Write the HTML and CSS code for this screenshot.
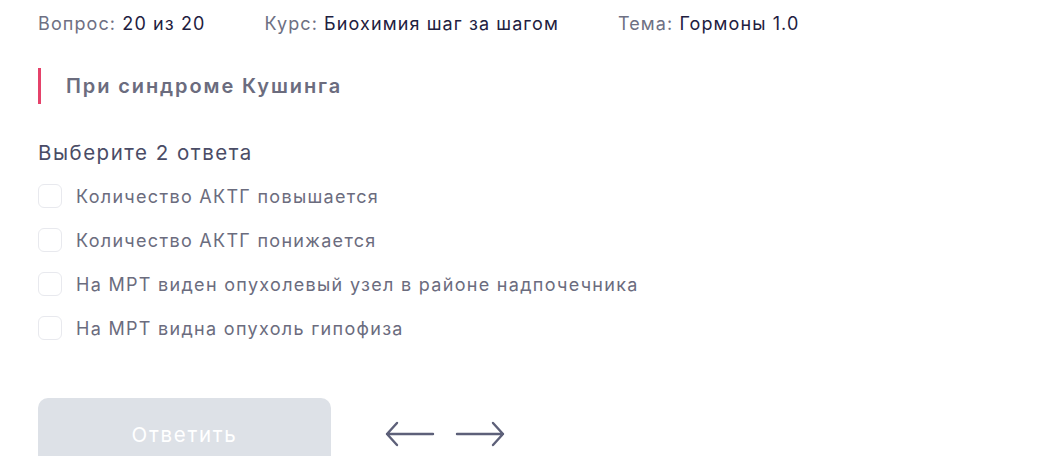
FILE: index.html
```html
<!DOCTYPE html>
<html lang="ru">

<head>
  <meta charset="UTF-8" />
  <meta name="viewport" content="width=device-width, initial-scale=1.0" />
  <title>Тест</title>
  <link rel="stylesheet" href="styles.css">
</head>

<body>
  <main class="quiz">
    <!-- Question meta -->
    <div class="quiz-meta">
      <span class="meta-item">Вопрос: <b>20 из 20</b></span>
      <span class="meta-item">Курс: <b>Биохимия шаг за шагом</b></span>
      <span class="meta-item">Тема: <b>Гормоны 1.0</b></span>
    </div>

    <h2 class="quiz-question">При синдроме Кушинга</h2>

    <p class="quiz-hint">Выберите 2 ответа</p>

    <ul class="answer-list">
      <li><label class="answer"><input type="checkbox" class="answer-box"><span>Количество АКТГ повышается</span></label></li>
      <li><label class="answer"><input type="checkbox" class="answer-box"><span>Количество АКТГ понижается</span></label></li>
      <li><label class="answer"><input type="checkbox" class="answer-box"><span>На МРТ виден опухолевый узел в районе надпочечника</span></label></li>
      <li><label class="answer"><input type="checkbox" class="answer-box"><span>На МРТ видна опухоль гипофиза</span></label></li>
    </ul>

    <div class="quiz-actions">
      <button class="answer-button" disabled>Ответить</button>
      <div class="nav-arrows">
        <button class="arrow-button" title="Предыдущий вопрос">
          <svg width="50" height="26" viewBox="0 0 50 26" fill="none" stroke="#5d6079" stroke-width="2.4" stroke-linecap="round" stroke-linejoin="round">
            <path d="M48 13H2M12 2L2 13l10 11" />
          </svg>
        </button>
        <button class="arrow-button" title="Следующий вопрос">
          <svg width="50" height="26" viewBox="0 0 50 26" fill="none" stroke="#5d6079" stroke-width="2.4" stroke-linecap="round" stroke-linejoin="round">
            <path d="M2 13h46M38 2l10 11-10 11" />
          </svg>
        </button>
      </div>
    </div>
  </main>
</body>

</html>
```

FILE: styles.css
```css
*,
*::after,
*::before {
  margin: 0;
  padding: 0;
  box-sizing: border-box;
}

body {
  font-family: 'Inter', 'Noto Sans', sans-serif;
  background: #fff;
  color: #4a4c66;
  overflow: hidden;
}

.quiz {
  padding: 12px 38px 0;
}

.quiz-meta {
  display: flex;
  gap: 59px;
  font-size: 18px;
  line-height: 24px;
  letter-spacing: 1.1px;
  color: #6e7083;
}

.quiz-meta b {
  font-weight: 400;
  color: #1e2040;
}

.quiz-question {
  margin-top: 32px;
  height: 36px;
  display: flex;
  align-items: center;
  padding-left: 25px;
  border-left: 3px solid #e5426a;
  font-size: 20px;
  font-weight: 600;
  letter-spacing: 1.9px;
  color: #6b6c7e;
}

.quiz-hint {
  margin-top: 36px;
  font-size: 20.5px;
  line-height: 26px;
  letter-spacing: 1.5px;
  color: #4a4c66;
}

.answer-list {
  list-style: none;
  margin-top: 8px;
}

.answer {
  display: flex;
  align-items: center;
  gap: 14px;
  height: 44px;
  font-size: 18px;
  letter-spacing: 1.3px;
  color: #6b6c7e;
  cursor: pointer;
}

.answer-box {
  appearance: none;
  width: 24px;
  height: 24px;
  border: 1.5px solid #e8e9ee;
  border-radius: 6px;
  background: #fff;
  flex-shrink: 0;
}

.quiz-actions {
  margin-top: 48px;
  display: flex;
  align-items: flex-start;
  gap: 54px;
}

.answer-button {
  width: 293px;
  height: 72px;
  border: none;
  border-radius: 10px;
  background: #dde1e7;
  color: #fff;
  font-family: inherit;
  font-size: 20.5px;
  letter-spacing: 1.7px;
}

.nav-arrows {
  display: flex;
  gap: 20px;
  margin-top: 23px;
}

.arrow-button {
  background: transparent;
  border: none;
  cursor: pointer;
  display: flex;
}
```
